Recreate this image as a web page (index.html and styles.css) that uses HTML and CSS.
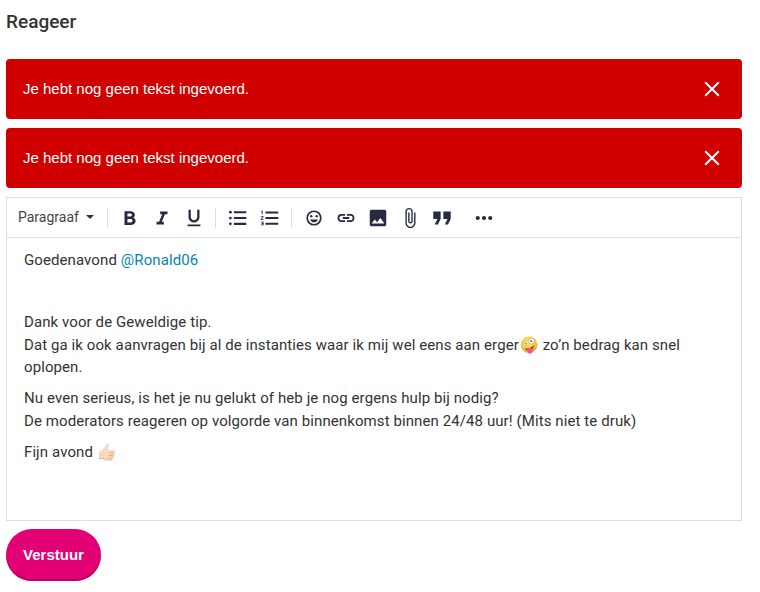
FILE: index.html
```html
<!DOCTYPE html>
<html lang="nl">
<head>
    <meta charset="utf-8">
    <title>Reageer</title>
    <link rel="stylesheet" href="styles.css">
</head>
<body>
    <div class="container">
        <h1>Reageer</h1>

        <div class="alert">
            <span>Je hebt nog geen tekst ingevoerd.</span>
            <svg class="close" viewBox="0 0 16 16"><path d="M1.2 1.2l13.6 13.6M14.8 1.2L1.2 14.8"/></svg>
        </div>
        <div class="alert">
            <span>Je hebt nog geen tekst ingevoerd.</span>
            <svg class="close" viewBox="0 0 16 16"><path d="M1.2 1.2l13.6 13.6M14.8 1.2L1.2 14.8"/></svg>
        </div>

        <div class="editor">
            <div class="toolbar">
                <div class="format"><span>Paragraaf</span><i class="caret"></i></div>
                <div class="group">
                    <div class="tool"><svg viewBox="0 0 24 24"><path d="M15.600 11.800c1.100-.8 1.700-1.900 1.700-3.100C17.300 6 15.300 4.500 12.800 4.500H6v15h7.600c2.500 0 4.500-1.800 4.500-4.100 0-1.700-1-3-2.500-3.600zM9.200 7.200h3.200c1 0 1.700.6 1.700 1.600s-.7 1.600-1.700 1.600H9.200zm3.600 9.600H9.200v-3.600h3.600c1.100 0 1.900.7 1.900 1.800s-.8 1.800-1.900 1.800z"/></svg></div>
                    <div class="tool"><svg viewBox="0 0 24 24"><path d="M10 5v3h2.200l-3.400 8H6v3h8v-3h-2.200l3.400-8H18V5z"/></svg></div>
                    <div class="tool"><svg viewBox="0 0 24 24"><path d="M12 17c3.310 0 6-2.690 6-6V3h-2.500v8c0 1.930-1.570 3.500-3.500 3.500S8.500 12.930 8.500 11V3H6v8c0 3.310 2.690 6 6 6zm-7 2v2h14v-2H5z"/></svg></div>
                </div>
                <div class="group">
                    <div class="tool"><svg viewBox="0 0 24 24"><path d="M7.500 4.500H21v2.200H7.500zM7.500 10.900H21v2.200H7.500zM7.500 17.300H21v2.200H7.500z"/><circle cx="3.700" cy="5.600" r="1.500"/><circle cx="3.700" cy="12" r="1.500"/><circle cx="3.700" cy="18.400" r="1.500"/></svg></div>
                    <div class="tool"><svg viewBox="0 0 24 24"><path d="M2 17h2v.5H3v1h1v.5H2v1h3v-4H2v1zm1-9h1V4H2v1h1v3zm-1 3h1.800L2 13.100v.9h3v-1H3.200L5 10.900V10H2v1zm5-6.200v2.200h14V4.800H7zm0 14.600h14v-2.200H7v2.200zm0-6.200h14V11H7v2.200z"/></svg></div>
                </div>
                <div class="group">
                    <div class="tool"><svg viewBox="0 0 24 24"><path d="M11.990 3.700A8.300 8.300 0 1 0 12 20.300 8.300 8.300 0 0 0 11.990 3.700zM12 18.500a6.500 6.500 0 1 1 0-13 6.500 6.500 0 0 1 0 13z"/><circle cx="15" cy="10" r="1.300"/><circle cx="9" cy="10" r="1.300"/><path d="M12 16.700c2 0 3.700-1.300 4.300-3.200H7.700c.6 1.900 2.300 3.200 4.300 3.200z"/></svg></div>
                    <div class="tool"><svg viewBox="0 0 24 24"><path d="M4.700 12c0-1.400 1.100-2.500 2.500-2.500H11V7.600H7.200a4.400 4.400 0 0 0 0 8.800H11v-1.900H7.200A2.500 2.500 0 0 1 4.700 12zM8.500 13h7v-2h-7zm8.300-5.400H13v1.900h3.800a2.500 2.500 0 0 1 0 5H13v1.900h3.800a4.400 4.400 0 0 0 0-8.800z"/></svg></div>
                    <div class="tool"><svg viewBox="0 0 24 24"><path d="M21 19V5c0-1.100-.9-2-2-2H5c-1.100 0-2 .9-2 2v14c0 1.100.9 2 2 2h14c1.100 0 2-.9 2-2zM8.500 13.500l2.500 3.010L14.500 12l4.500 6H5l3.500-4.500z"/></svg></div>
                    <div class="tool"><svg viewBox="0 0 24 24"><path d="M16.500 6v11.500c0 2.210-1.790 4-4 4s-4-1.790-4-4V5a2.500 2.500 0 0 1 5 0v10.500c0 .55-.45 1-1 1s-1-.45-1-1V6H10v9.500a2.500 2.500 0 0 0 5 0V5c0-2.210-1.790-4-4-4S7 2.790 7 5v12.500c0 3.040 2.460 5.500 5.500 5.500s5.500-2.460 5.500-5.500V6h-1.500z"/></svg></div>
                    <div class="tool"><svg viewBox="0 0 24 24"><path d="M2.500 5h8v8l-3 6H4l3-6H2.500zM13.500 5h8v8l-3 6H15l3-6h-4.500z"/></svg></div>
                    <div class="tool more"><svg viewBox="0 0 24 24"><circle cx="5.200" cy="12" r="2.300"/><circle cx="12" cy="12" r="2.300"/><circle cx="18.800" cy="12" r="2.300"/></svg></div>
                </div>
            </div>

            <div class="content">
                <p>Goedenavond <a>@Ronald06</a></p>
                <p>&nbsp;</p>
                <p>Dank voor de Geweldige tip.<br>
                Dat ga ik ook aanvragen bij al de instanties waar ik mij wel eens aan erger<svg class="emoji" viewBox="0 0 18 18">
                    <defs>
                        <radialGradient id="face" cx=".45" cy=".35" r=".65">
                            <stop offset="0" stop-color="#ffe873"/>
                            <stop offset=".65" stop-color="#fbcc3c"/>
                            <stop offset="1" stop-color="#df942c"/>
                        </radialGradient>
                    </defs>
                    <circle cx="9" cy="8.700" r="8.300" fill="url(#face)"/>
                    <circle cx="4.900" cy="7.400" r="2" fill="#fff" stroke="#b88435" stroke-width=".5"/>
                    <circle cx="11.500" cy="5" r="2.900" fill="#fff" stroke="#b88435" stroke-width=".5"/>
                    <circle cx="5.200" cy="7.600" r=".7" fill="#493125"/>
                    <circle cx="11.300" cy="5.100" r=".9" fill="#493125"/>
                    <path d="M4.500 12.300q5.700 1 9.500-3.200-.2 5.100-4.300 5.700-3.600.4-5.200-2.500z" fill="#794222"/>
                    <path d="M6.500 12.800l5-1.500 1 3.600q0 2.700-2.300 2.800-2 .1-2.700-1.800z" fill="#f35685"/>
                </svg> zo’n bedrag kan snel oplopen.</p>
                <p>Nu even serieus, is het je nu gelukt of heb je nog ergens hulp bij nodig?<br>
                De moderators reageren op volgorde van binnenkomst binnen 24/48 uur! (Mits niet te druk)</p>
                <p>Fijn avond <svg class="emoji" viewBox="0 0 18 18">
                    <path d="M1 8.500q3.500-.9 5.300-3.500Q8.300 3 8.500 1.300q.2-1.400 1.500-.7 1.400 1 .3 5.300l-.2 1h5.400q1.500.1 1.500 1.400 0 1-.8 1.300 1.100.6.800 1.700-.2.900-1.100 1.100.8.600.4 1.600-.3.800-1.100.9.400 1.700-1.400 1.900-3.600.5-6.700-.4L5 15.500 1 16z" fill="#f9d9bd"/>
                    <path d="M1 15.700l4-.3 2.100 1.300q3.300.7 6.700.2M10.900 9.800h5.100M10.700 12.500h5M10.500 15h4.200" fill="none" stroke="#dca683" stroke-width=".8"/>
                </svg></p>
            </div>
        </div>

        <button class="submit">Verstuur</button>
    </div>
</body>
</html>
```
FILE: styles.css
```css
body {
    margin: 0;
    background: #fff;
    color: #333;
    font-family: Roboto, sans-serif;
}
.container {
    width: 736px;
    margin-left: 6px;
}
h1 {
    margin: 0 0 26px;
    padding-top: 11px;
    font-size: 19px;
    line-height: 22px;
    font-weight: 500;
}
.alert {
    display: flex;
    align-items: center;
    justify-content: space-between;
    box-sizing: border-box;
    height: 60px;
    margin-bottom: 9px;
    padding: 0 22px 0 17px;
    background: #d00000;
    border-radius: 4px;
    color: #fff;
    font: 15px "Liberation Sans", Arial, sans-serif;
}
.alert span {
    padding-bottom: 2px;
}
.close {
    width: 16px;
    height: 16px;
    fill: none;
    stroke: #fff;
    stroke-width: 2;
}
.editor {
    box-sizing: border-box;
    height: 324px;
    border: 1px solid #ddd;
}
.toolbar {
    display: flex;
    align-items: center;
    height: 39px;
    border-bottom: 1px solid #ddd;
}
.format {
    display: flex;
    align-items: center;
    width: 89px;
    padding-left: 11px;
    padding-bottom: 1px;
    font-size: 14px;
    color: #444;
}
.caret {
    margin-left: 7px;
    border: 4px solid transparent;
    border-top-color: #333;
    border-bottom: 0;
}
.group {
    display: flex;
    align-items: center;
    height: 20px;
    padding: 0 5px 0 6px;
    border-left: 1px solid #ddd;
}
.tool {
    display: flex;
    justify-content: center;
    width: 32px;
}
.tool svg {
    width: 22px;
    height: 22px;
    fill: #272b41;
}
.more {
    margin-left: 10px;
}
.content {
    padding: 11px 17px;
    font-size: 15px;
    line-height: 22.6px;
    letter-spacing: 0.092px;
}
.content p {
    margin: 0 0 8.5px;
}
.content a {
    color: #0784b5;
}
.emoji {
    width: 18px;
    height: 18px;
    margin: 0 1px;
    vertical-align: -4px;
}
.submit {
    display: block;
    width: 95px;
    height: 52px;
    margin-top: 8px;
    padding: 0 0 2px;
    border: 0;
    border-radius: 26px;
    background: #e20074;
    box-shadow: inset 0 -2px 1px #bd0061;
    color: #fff;
    font: bold 15px "Liberation Sans", Arial, sans-serif;
}
```
